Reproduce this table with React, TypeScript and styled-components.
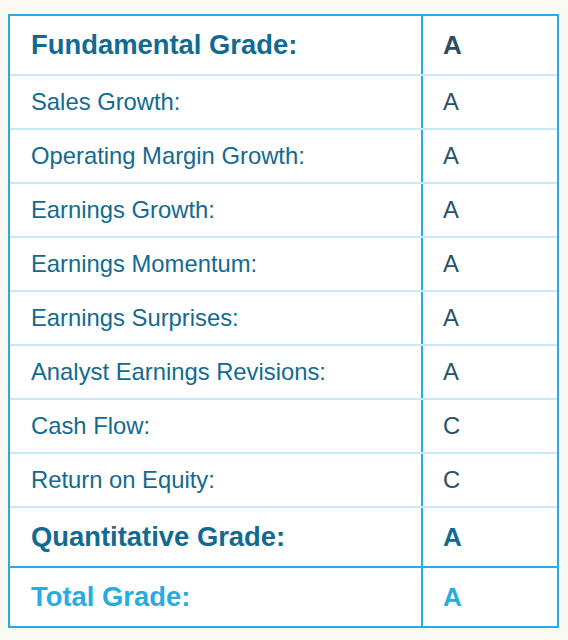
import React from 'react';
import styled, { createGlobalStyle } from 'styled-components';

const GlobalStyle = createGlobalStyle`
	body {
		margin: 0;
		background: #fafaf3;
		font-family: 'Liberation Sans', Arial, sans-serif;
	}
`;

type Tone = 'head' | 'row' | 'total';

interface GradeRow {
	label: string;
	grade: string;
	tone: Tone;
}

const rows: GradeRow[] = [
	{ label: 'Fundamental Grade:', grade: 'A', tone: 'head' },
	{ label: 'Sales Growth:', grade: 'A', tone: 'row' },
	{ label: 'Operating Margin Growth:', grade: 'A', tone: 'row' },
	{ label: 'Earnings Growth:', grade: 'A', tone: 'row' },
	{ label: 'Earnings Momentum:', grade: 'A', tone: 'row' },
	{ label: 'Earnings Surprises:', grade: 'A', tone: 'row' },
	{ label: 'Analyst Earnings Revisions:', grade: 'A', tone: 'row' },
	{ label: 'Cash Flow:', grade: 'C', tone: 'row' },
	{ label: 'Return on Equity:', grade: 'C', tone: 'row' },
	{ label: 'Quantitative Grade:', grade: 'A', tone: 'head' },
	{ label: 'Total Grade:', grade: 'A', tone: 'total' },
];

export default function App() {
	return (
		<>
			<GlobalStyle />
			<GradeTable>
				{rows.map((row, index) => (
					<Row
						key={row.label}
						$tall={row.tone !== 'row'}
						$strong={index === rows.length - 2}
						$last={index === rows.length - 1}
					>
						<Label $tone={row.tone}>{row.label}</Label>
						<Grade $tone={row.tone} $first={index === 0}>
							{row.grade}
						</Grade>
					</Row>
				))}
			</GradeTable>
		</>
	);
}

const GradeTable = styled.div`
	width: 551px;
	margin: 14px 0 0 8px;
	border: 2px solid #29abe2;
	box-sizing: border-box;
	background: #ffffff;
`;

const Row = styled.div<{ $tall: boolean; $strong: boolean; $last: boolean }>`
	display: grid;
	grid-template-columns: 413px 1fr;
	height: ${(p) => (p.$tall ? '58px' : '52px')};
	border-bottom: ${(p) =>
		p.$last ? 'none' : p.$strong ? '2px solid #29abe2' : '2px solid #c8eaf6'};
`;

const Cell = styled.div`
	display: flex;
	align-items: center;
	white-space: nowrap;
`;

const Label = styled(Cell)<{ $tone: Tone }>`
	padding-left: 21px;
	border-right: 2px solid #29abe2;
	color: ${(p) => (p.$tone === 'total' ? '#29abe2' : '#136a90')};
	font-size: ${(p) => (p.$tone === 'row' ? '23.8px' : '27.4px')};
	font-weight: ${(p) => (p.$tone === 'row' ? 400 : 700)};
`;

const Grade = styled(Cell)<{ $tone: Tone; $first: boolean }>`
	padding-left: 20px;
	color: ${(p) =>
		p.$tone === 'total'
			? '#29abe2'
			: p.$first
			? '#2c4e5f'
			: p.$tone === 'head'
			? '#136a90'
			: '#2a5266'};
	font-size: ${(p) => (p.$tone === 'row' ? '23.8px' : '26px')};
	font-weight: ${(p) => (p.$tone === 'row' ? 400 : 700)};
`;
